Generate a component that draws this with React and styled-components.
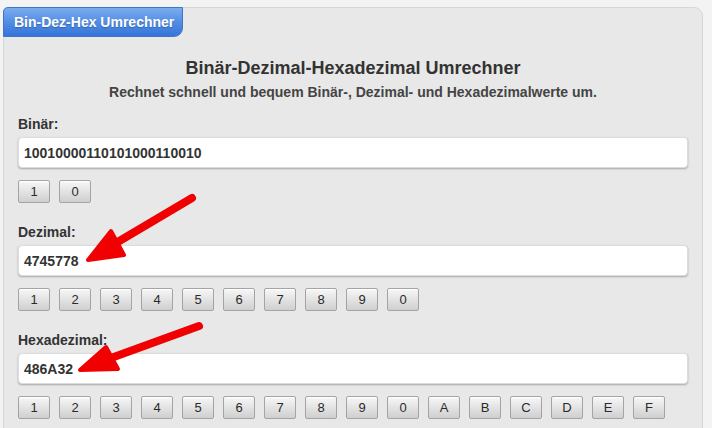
import React from 'react'
import styled, { createGlobalStyle } from 'styled-components'

const Global = createGlobalStyle`
  html, body {
    margin: 0;
    padding: 0;
    background: #f3f3f3;
    font-family: "Liberation Sans", Arial, sans-serif;
  }
`

const Page = styled.div`
  position: relative;
  width: 712px;
  height: 428px;
  overflow: hidden;
  padding: 7px 0 0 3px;
  box-sizing: border-box;
`

const Panel = styled.div`
  width: 700px;
  height: 440px;
  box-sizing: border-box;
  background: #e8e8e8;
  border: 1px solid #d6d6d6;
  border-radius: 4px 9px 0 0;
  display: flex;
  flex-direction: column;
`

const Tab = styled.div`
  width: 180px;
  height: 30px;
  margin: -1px 0 0 -1px;
  box-sizing: border-box;
  padding-left: 10px;
  display: flex;
  align-items: center;
  color: #fff;
  font-weight: bold;
  font-size: 14px;
  background: linear-gradient(#7eacee 0%, #5690e6 45%, #3575d8 100%);
  border: 1px solid #3f76c9;
  border-radius: 5px 0 9px 0;
  text-shadow: 0 1px 1px rgba(0, 0, 0, 0.25);
`

const Body = styled.div`
  padding: 21px 14px 0 14px;
  display: flex;
  flex-direction: column;
`

const Title = styled.h1`
  margin: 0;
  text-align: center;
  font-size: 18px;
  line-height: 20px;
  color: #333;
`

const Subtitle = styled.p`
  margin: 6px 0 0 0;
  text-align: center;
  font-size: 14px;
  line-height: 16px;
  font-weight: bold;
  color: #444;
`

const Section = styled.div`
  display: flex;
  flex-direction: column;
  margin-top: ${(p) => p.$top}px;
`

const Label = styled.label`
  font-size: 14px;
  line-height: 16px;
  font-weight: bold;
  color: #333;
`

const Field = styled.div`
  margin-top: 5px;
  height: 31px;
  box-sizing: border-box;
  background: #fff;
  border: 1px solid #dcdcdc;
  border-radius: 4px;
  box-shadow: 0 1px 2px rgba(0, 0, 0, 0.28);
  display: flex;
  align-items: center;
  padding-left: 5px;
  font-size: 14px;
  font-weight: bold;
  color: #333;
`

const Keys = styled.div`
  margin-top: 12px;
  display: flex;
  gap: 9px;
`

const Key = styled.button`
  width: 32px;
  height: 23px;
  padding: 0;
  box-sizing: border-box;
  border: 1px solid #a4a4a4;
  border-radius: 2px;
  background: linear-gradient(#f7f7f7, #cfcfcf);
  box-shadow: inset 0 1px 0 #fff;
  font-family: "Liberation Sans", Arial, sans-serif;
  font-size: 13px;
  color: #2a2a2a;
`

const Overlay = styled.svg`
  position: absolute;
  top: 0;
  left: 0;
  pointer-events: none;
`

const sections = [
  { label: 'Binär:', value: '10010000110101000110010', keys: ['1', '0'], top: 16 },
  { label: 'Dezimal:', value: '4745778', keys: '1234567890'.split(''), top: 21 },
  { label: 'Hexadezimal:', value: '486A32', keys: '1234567890ABCDEF'.split(''), top: 21 },
]

const Arrow = ({ tail, base, head }) => (
  <g fill="#f00000" stroke="#f00000" strokeLinejoin="round">
    <line x1={tail[0]} y1={tail[1]} x2={base[0]} y2={base[1]} strokeWidth="8" strokeLinecap="round" />
    <polygon points={head.map((p) => p.join(',')).join(' ')} strokeWidth="4" />
  </g>
)

export default function App() {
  return (
    <Page>
      <Global />
      <Panel>
        <Tab>Bin-Dez-Hex Umrechner</Tab>
        <Body>
          <Title>Binär-Dezimal-Hexadezimal Umrechner</Title>
          <Subtitle>Rechnet schnell und bequem Binär-, Dezimal- und Hexadezimalwerte um.</Subtitle>
          {sections.map((s) => (
            <Section key={s.label} $top={s.top}>
              <Label>{s.label}</Label>
              <Field>{s.value}</Field>
              <Keys>
                {s.keys.map((k) => (
                  <Key key={k}>{k}</Key>
                ))}
              </Keys>
            </Section>
          ))}
        </Body>
      </Panel>
      <Overlay width="712" height="428" viewBox="0 0 712 428">
        <Arrow tail={[192, 198]} base={[116, 243]} head={[[88, 260], [111, 231], [124, 255]]} />
        <Arrow tail={[199, 326]} base={[111, 358]} head={[[80, 370], [106, 347], [118, 369]]} />
      </Overlay>
    </Page>
  )
}
